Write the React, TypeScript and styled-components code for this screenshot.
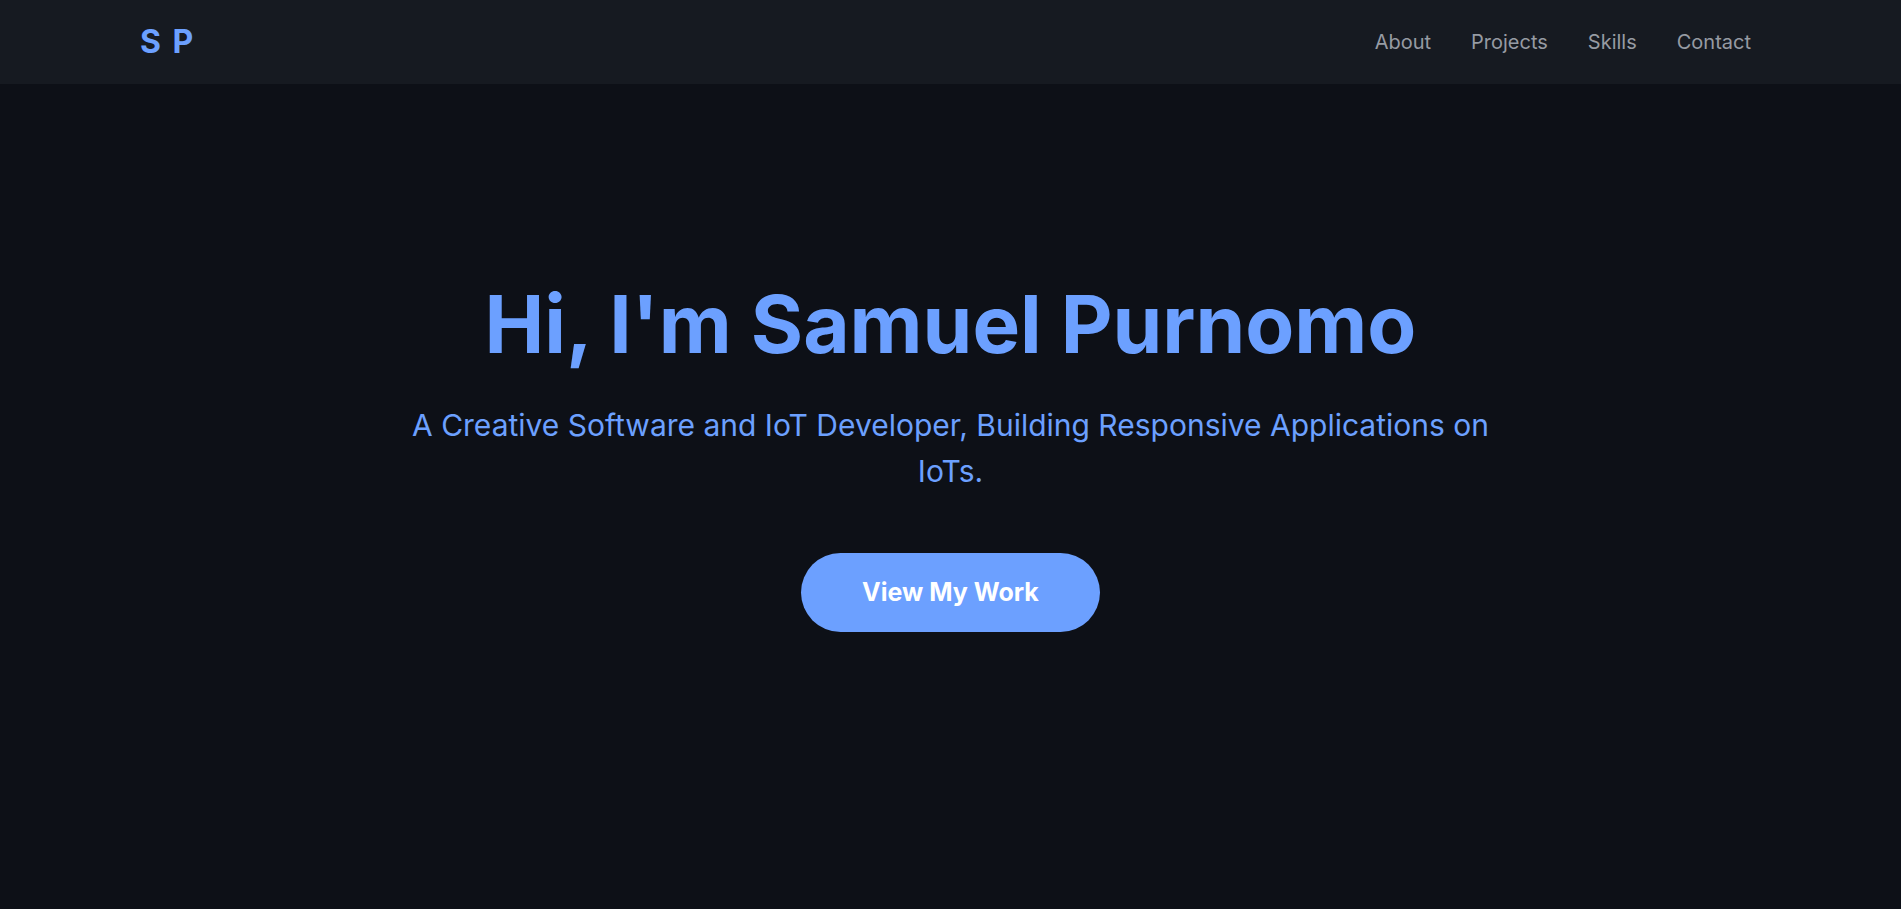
import React from "react";
import styled, { createGlobalStyle } from "styled-components";

const GlobalStyle = createGlobalStyle`
  * { box-sizing: border-box; }
  html, body {
    margin: 0;
    padding: 0;
    background: #0d1017;
    font-family: Inter, "Noto Sans", "Liberation Sans", sans-serif;
  }
`;

const Page = styled.div`
  display: flex;
  flex-direction: column;
  min-height: 100vh;
  background: #0d1017;
`;

const Header = styled.header`
  height: 84px;
  display: flex;
  align-items: center;
  justify-content: space-between;
  padding: 0 150px 0 140px;
  background: #161a21;
`;

const Logo = styled.div`
  font-size: 32px;
  font-weight: 700;
  letter-spacing: 11.5px;
  color: #6ca0ff;
  line-height: 1;
`;

const Nav = styled.nav`
  display: flex;
  align-items: center;
  gap: 40px;
`;

const NavLink = styled.a`
  font-size: 20px;
  font-weight: 400;
  color: #969ba3;
  text-decoration: none;
  cursor: pointer;
`;

const Hero = styled.main`
  flex: 1;
  display: flex;
  flex-direction: column;
  align-items: center;
  padding-top: 192px;
  text-align: center;
`;

const Title = styled.h1`
  margin: 0;
  font-size: 80px;
  line-height: 96px;
  font-weight: 700;
  color: #6ca0ff;
`;

const Subtitle = styled.p`
  margin: 30px 0 0;
  max-width: 1100px;
  font-size: 30px;
  line-height: 46px;
  font-weight: 400;
  color: #6ca0ff;
`;

const CTA = styled.button`
  margin-top: 59px;
  padding: 25px 61px;
  border: none;
  border-radius: 40px;
  background: #6ca0ff;
  color: #ffffff;
  font-family: inherit;
  font-size: 25px;
  line-height: 29px;
  font-weight: 700;
  cursor: pointer;
`;

export default function App() {
  return (
    <>
      <GlobalStyle />
      <Page>
        <Header>
          <Logo>SP</Logo>
          <Nav>
            <NavLink>About</NavLink>
            <NavLink>Projects</NavLink>
            <NavLink>Skills</NavLink>
            <NavLink>Contact</NavLink>
          </Nav>
        </Header>
        <Hero>
          <Title>Hi, I'm Samuel Purnomo</Title>
          <Subtitle>
            A Creative Software and IoT Developer, Building Responsive Applications on IoTs.
          </Subtitle>
          <CTA>View My Work</CTA>
        </Hero>
      </Page>
    </>
  );
}
